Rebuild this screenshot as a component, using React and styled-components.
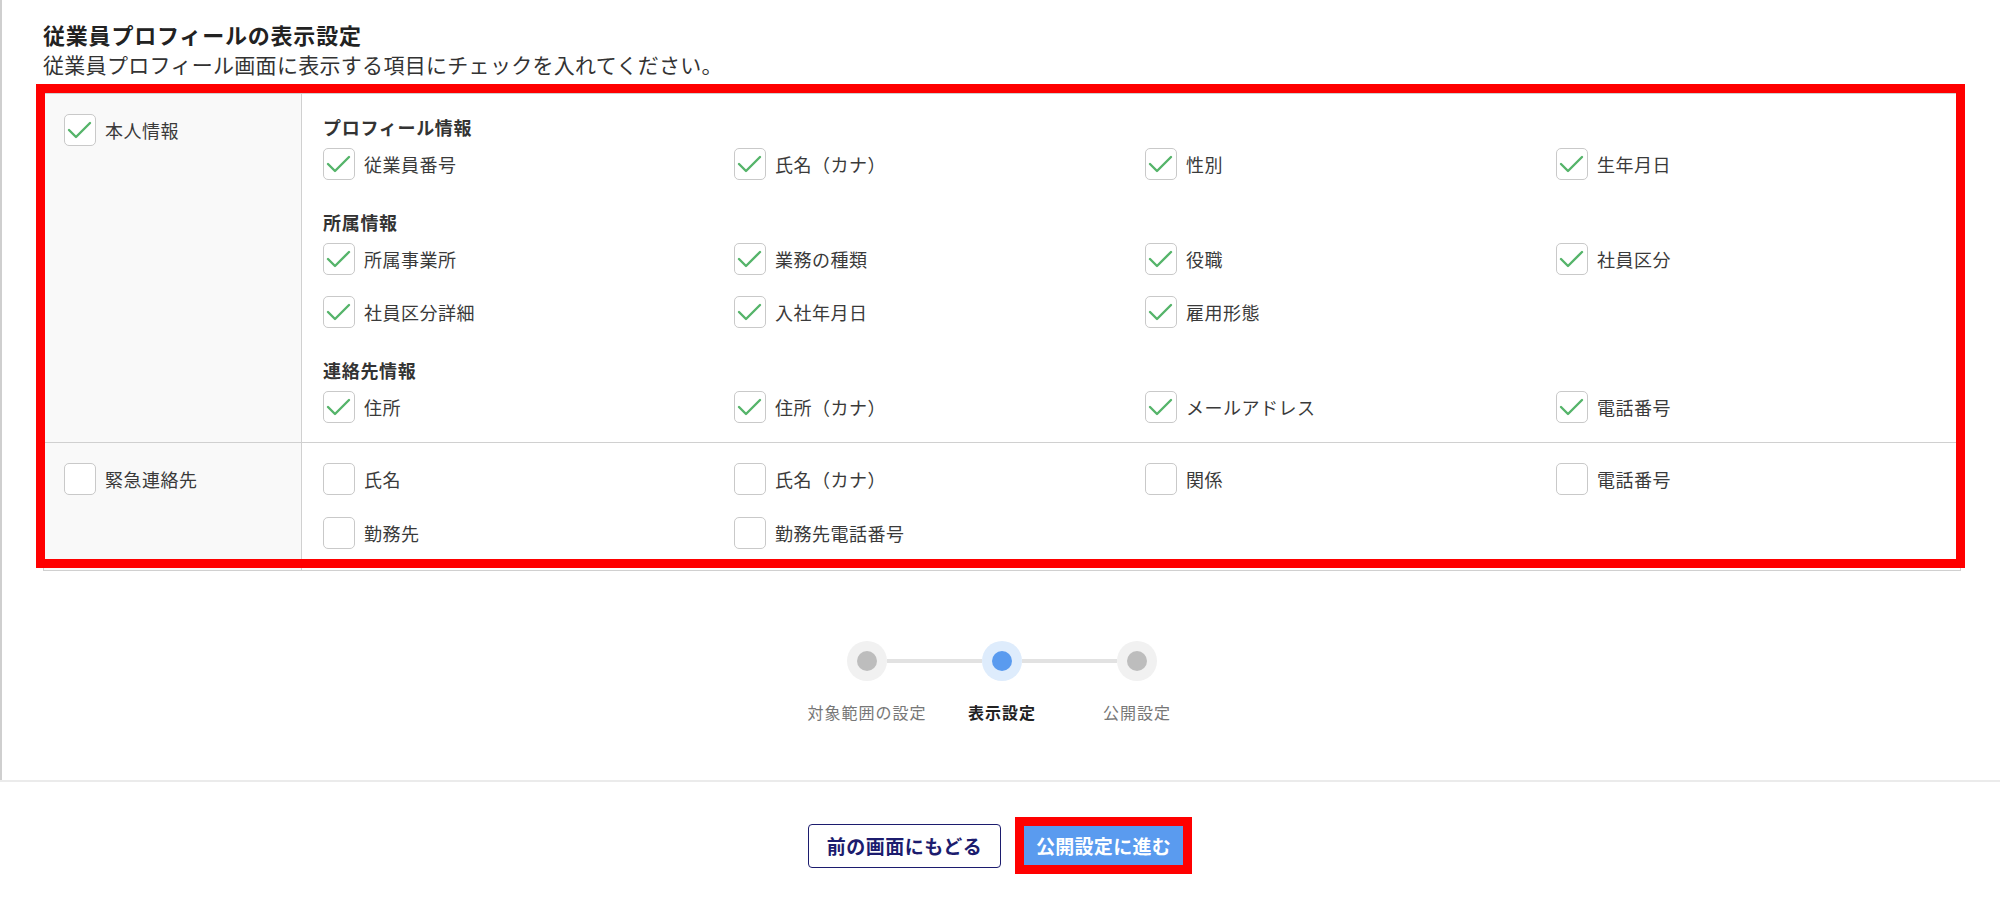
import React from 'react'
import styled, { createGlobalStyle } from 'styled-components'

const GlobalStyle = createGlobalStyle`
  body {
    margin: 0;
    background: #fff;
    font-family: "Noto Sans CJK JP", "Noto Sans", sans-serif;
    color: #333;
  }
`;

const Page = styled.div`
  width: 2000px;
  display: flex;
  flex-direction: column;
`;

const Main = styled.main`
  border-left: 2px solid #cfcfcf;
  padding: 19px 39px 56px 41px;
  display: flex;
  flex-direction: column;
`;

const Heading = styled.h2`
  margin: 0;
  font-size: 22px;
  line-height: 30px;
  font-weight: 700;
  letter-spacing: 0.8px;
  color: #222;
`;

const Lead = styled.p`
  margin: 0;
  font-size: 21px;
  line-height: 30px;
  letter-spacing: 0.3px;
  color: #333;
`;

const TableWrap = styled.div`
  position: relative;
  margin-top: 14px;
`;

const Table = styled.div`
  border: 1px solid #d0d0d0;
`;

const Row = styled.div`
  display: grid;
  grid-template-columns: 258px 1fr;
  & + & {
    border-top: 1px solid #d0d0d0;
  }
`;

const HeadCell = styled.div`
  background: #f9f9f9;
  border-right: 1px solid #d0d0d0;
  padding: 20px 20px;
`;

const BodyCell = styled.div`
  padding: ${p => p.$pad || '20px 0 19px 21px'};
  display: flex;
  flex-direction: column;
`;

const Section = styled.div`
  & + & {
    margin-top: 29px;
  }
`;

const SectionTitle = styled.div`
  font-size: 18px;
  line-height: 26px;
  font-weight: 700;
  letter-spacing: 0.7px;
  color: #333;
  margin-bottom: 8px;
`;

const Grid = styled.div`
  display: grid;
  grid-template-columns: repeat(4, 411px);
  row-gap: ${p => p.$gap || 21}px;
`;

const Item = styled.label`
  display: flex;
  align-items: center;
  gap: 9px;
  font-size: 18px;
  letter-spacing: 0.5px;
  color: #3a3a3a;
  height: 32px;
`;

const Box = styled.span`
  box-sizing: border-box;
  width: 32px;
  height: 32px;
  border: 1px solid #c9c9c9;
  border-radius: 5px;
  background: #fff;
  display: flex;
  align-items: center;
  justify-content: center;
  flex-shrink: 0;
`;

const Annotation = styled.div`
  position: absolute;
  left: -7px;
  top: -9px;
  right: -4px;
  bottom: 3px;
  border: 9px solid #ff0000;
  pointer-events: none;
`;

const Stepper = styled.div`
  margin-top: 70px;
  display: flex;
  flex-direction: column;
  align-items: center;
  gap: 19px;
`;

const Track = styled.div`
  display: flex;
  align-items: center;
`;

const Dot = styled.span`
  width: 40px;
  height: 40px;
  border-radius: 50%;
  background: ${p => (p.$active ? '#deecfc' : '#f1f1f1')};
  display: flex;
  align-items: center;
  justify-content: center;
  &::after {
    content: '';
    width: 20px;
    height: 20px;
    border-radius: 50%;
    background: ${p => (p.$active ? '#5a9bef' : '#bdbdbd')};
  }
`;

const Line = styled.span`
  width: 95px;
  height: 4px;
  background: #e2e2e2;
`;

const Labels = styled.div`
  display: flex;
`;

const StepLabel = styled.span`
  width: 135px;
  text-align: center;
  font-size: 16px;
  line-height: 24px;
  letter-spacing: 1px;
  white-space: nowrap;
  font-weight: ${p => (p.$active ? 700 : 400)};
  color: ${p => (p.$active ? '#222' : '#777')};
`;

const Footer = styled.footer`
  border-top: 2px solid #ebebeb;
  padding: 35px 0 28px;
  display: flex;
  justify-content: center;
  align-items: center;
`;

const BackButton = styled.button`
  box-sizing: border-box;
  width: 193px;
  height: 44px;
  background: #fff;
  border: 1.5px solid #1c1c6e;
  border-radius: 4px;
  color: #1c1c6e;
  font-family: inherit;
  font-size: 19px;
  font-weight: 700;
  letter-spacing: 0.5px;
  padding: 0;
`;

const Highlight = styled.div`
  margin-left: 14px;
  border: 9px solid #ff0000;
  display: flex;
`;

const NextButton = styled.button`
  width: 159px;
  height: 39px;
  background: #5a9bef;
  border: none;
  color: #fff;
  font-family: inherit;
  font-size: 19px;
  font-weight: 700;
  letter-spacing: 0.3px;
  padding: 0;
`;

const Check = () => (
  <svg width="26" height="22" viewBox="0 0 26 22">
    <polyline points="2,11 9,18 23,4" fill="none" stroke="#55b46a" strokeWidth="2.4" strokeLinecap="round" strokeLinejoin="round" />
  </svg>
);

const CheckItem = ({ label, checked }) => (
  <Item>
    <Box>{checked && <Check />}</Box>
    <span>{label}</span>
  </Item>
);

const sections = [
  { title: 'プロフィール情報', items: ['従業員番号', '氏名（カナ）', '性別', '生年月日'] },
  { title: '所属情報', items: ['所属事業所', '業務の種類', '役職', '社員区分', '社員区分詳細', '入社年月日', '雇用形態'] },
  { title: '連絡先情報', items: ['住所', '住所（カナ）', 'メールアドレス', '電話番号'] },
];

const emergency = ['氏名', '氏名（カナ）', '関係', '電話番号', '勤務先', '勤務先電話番号'];

const steps = ['対象範囲の設定', '表示設定', '公開設定'];

export default function App() {
  return (
    <Page>
      <GlobalStyle />
      <Main>
        <Heading>従業員プロフィールの表示設定</Heading>
        <Lead>従業員プロフィール画面に表示する項目にチェックを入れてください。</Lead>
        <TableWrap>
          <Table>
            <Row>
              <HeadCell>
                <CheckItem label="本人情報" checked />
              </HeadCell>
              <BodyCell>
                {sections.map(s => (
                  <Section key={s.title}>
                    <SectionTitle>{s.title}</SectionTitle>
                    <Grid>
                      {s.items.map(i => <CheckItem key={i} label={i} checked />)}
                    </Grid>
                  </Section>
                ))}
              </BodyCell>
            </Row>
            <Row>
              <HeadCell>
                <CheckItem label="緊急連絡先" />
              </HeadCell>
              <BodyCell $pad="20px 0 21px 21px">
                <Grid $gap={22}>
                  {emergency.map(i => <CheckItem key={i} label={i} />)}
                </Grid>
              </BodyCell>
            </Row>
          </Table>
          <Annotation />
        </TableWrap>
        <Stepper>
          <Track>
            <Dot />
            <Line />
            <Dot $active />
            <Line />
            <Dot />
          </Track>
          <Labels>
            {steps.map((s, i) => (
              <StepLabel key={s} $active={i === 1}>{s}</StepLabel>
            ))}
          </Labels>
        </Stepper>
      </Main>
      <Footer>
        <BackButton>前の画面にもどる</BackButton>
        <Highlight>
          <NextButton>公開設定に進む</NextButton>
        </Highlight>
      </Footer>
    </Page>
  )
}
